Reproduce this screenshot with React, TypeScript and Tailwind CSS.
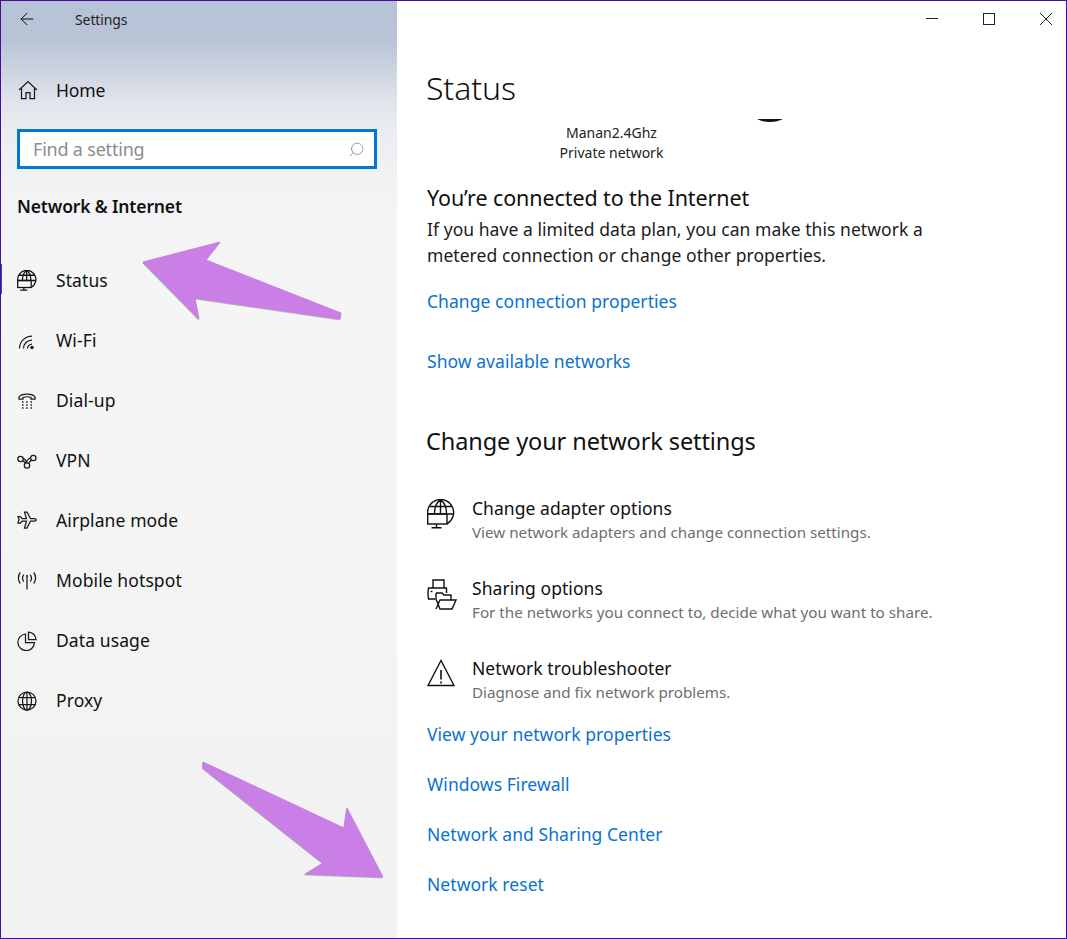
import React from 'react';
import { ArrowLeft, Search } from 'lucide-react';

const Arrow = ({ className, viewBox, points }: { className: string; viewBox: string; points: string }) => (
  <svg className={className} viewBox={viewBox} fill="none">
    <polygon points={points} fill="#777" opacity="0.6" transform="translate(-0.5 1)" stroke="#777" strokeWidth="0.5" />
    <polygon points={points} fill="#c97fe6" stroke="#c97fe6" strokeWidth="1" strokeLinejoin="round" />
  </svg>
);

const iconProps = {
  width: 20,
  height: 20,
  viewBox: '0 0 20 20',
  fill: 'none',
  stroke: '#1a1a1a',
  strokeWidth: 1.25,
};

const HomeIcon = () => (
  <svg {...iconProps}>
    <path d="M1 10 10 1.500 19 10M3.500 8v10.500h4.500v-6h4v6h4.500V8" />
  </svg>
);

const GlobeScreenIcon = ({ large }: { large?: boolean }) => (
  <svg width={large ? 28 : 20} height={large ? 30 : 21} viewBox="0 0 28 30" fill="none" stroke="#111" strokeWidth={large ? 1.4 : 1.8} className={large ? '' : '-mt-[2px]'}>
    <path d="M.7 15A13 13 0 1 1 20 24.800" />
    <path d="M7.500 15C7.500 7 10 3 13.500 .8 17 3 19.500 7 19.500 15M13.500 1v14M2.500 7.500h22M.7 15h26" />
    <rect x=".7" y="15" width="19.300" height="10" />
    <path d="M9.500 25v3.500M4.500 28.800h10" />
  </svg>
);

const WifiIcon = () => (
  <svg {...iconProps}>
    <path d="M2.500 17.500A12.500 12.500 0 0 1 15 5M6.500 17.500A8.500 8.500 0 0 1 15 9M10.500 17.500A4.500 4.500 0 0 1 15 13" />
    <circle cx="15" cy="16.500" r="1.700" fill="#111" stroke="none" />
  </svg>
);

const DialIcon = () => (
  <svg {...iconProps}>
    <path d="M2 8V6c2-4 14-4 16 0v2h-4V6.500c-2-1-6-1-8 0V8Z" />
    <path d="M5 11h1.500M9.200 11h1.500M13.500 11H15M5 14h1.500M9.200 14h1.500M13.500 14H15M5 17h1.500M9.200 17h1.500M13.500 17H15" strokeWidth="1.400" />
  </svg>
);

const VpnIcon = () => (
  <svg {...iconProps}>
    <circle cx="3.500" cy="8" r="2.700" />
    <circle cx="16.300" cy="7" r="2.700" />
    <circle cx="10" cy="14.500" r="2.700" />
    <path d="M6 7.500c2.500 0 3 2 3.500 4M13.700 7c-2.500 0-3 2-4 3.500s-2 1-3.700-.5M14.500 9.300c-1 1-2.500 1.700-3 3" />
  </svg>
);

const PlaneIcon = () => (
  <svg {...iconProps}>
    <path d="M7.500 1h2.500l3.500 6.500h4c2 0 2.500 2 .5 2.500h-4.500L10 17H7.500l2-7H5l-1.500 2H1l1-3.500L1 5.500h2.500L5 7.500h4.500Z" />
  </svg>
);

const HotspotIcon = () => (
  <svg {...iconProps}>
    <path d="M10 6v12.500" />
    <path d="M6.800 3.500c-1.500 2-1.500 5 0 7M13.200 3.500c1.500 2 1.500 5 0 7M3.300 1.500c-2.500 3-2.500 8 0 11M16.700 1.500c2.500 3 2.500 8 0 11" />
    <circle cx="10" cy="5" r="1" fill="#111" stroke="none" />
  </svg>
);

const PieIcon = () => (
  <svg {...iconProps}>
    <path d="M8.500 3A8.300 8.300 0 1 0 17.500 11.500H8.500Z" />
    <path d="M11.500 1.200c4 .3 7 3.200 7.500 7.300h-7.500Z" />
  </svg>
);

const GlobeIcon = () => (
  <svg {...iconProps}>
    <circle cx="10" cy="10" r="9" />
    <ellipse cx="10" cy="10" rx="4.500" ry="9" />
    <path d="M10 1v18M1.800 6.500h16.400M1.800 13.500h16.400" />
  </svg>
);

const PrinterFolderIcon = () => (
  <svg width="30" height="31" viewBox="0 0 30 31" fill="none" stroke="#111" strokeWidth="1.400">
    <path d="M6 9V1h11v8" />
    <path d="M8 20H1.500c-.5-3-.5-8 0-11h18v5" />
    <path d="M3.500 12.500h2" />
    <path d="M9 14h6l2 2h7v5" />
    <path d="M9 14v6l4 10h12l4-9H13l-4 9" />
  </svg>
);

const WarningIcon = () => (
  <svg width="28" height="28" viewBox="0 0 28 28" fill="none" stroke="#111" strokeWidth="1.400">
    <path d="M14 1.500 1 26.500h26Z" />
    <path d="M14 11v9.500M14 22.500v2" strokeWidth="1.600" />
  </svg>
);

const WindowButtons = () => (
  <div className="flex justify-end gap-[45px] pr-[14px] pt-[12px]">
    <svg width="12" height="12" viewBox="0 0 12 12" stroke="#222" fill="none"><path d="M0 5.500h12" /></svg>
    <svg width="12" height="12" viewBox="0 0 12 12" stroke="#222" fill="none"><rect x=".5" y=".5" width="11" height="11" /></svg>
    <svg width="12" height="12" viewBox="0 0 12 12" stroke="#222" fill="none"><path d="M0 0 12 12M12 0 0 12" /></svg>
  </div>
);

const navItems = [
  { label: 'Status', icon: <GlobeScreenIcon /> },
  { label: 'Wi-Fi', icon: <WifiIcon /> },
  { label: 'Dial-up', icon: <DialIcon /> },
  { label: 'VPN', icon: <VpnIcon /> },
  { label: 'Airplane mode', icon: <PlaneIcon /> },
  { label: 'Mobile hotspot', icon: <HotspotIcon /> },
  { label: 'Data usage', icon: <PieIcon /> },
  { label: 'Proxy', icon: <GlobeIcon /> },
];

const settingsRows = [
  { title: 'Change adapter options', text: 'View network adapters and change connection settings.', icon: <GlobeScreenIcon large /> },
  { title: 'Sharing options', text: 'For the networks you connect to, decide what you want to share.', icon: <PrinterFolderIcon /> },
  { title: 'Network troubleshooter', text: 'Diagnose and fix network problems.', icon: <WarningIcon /> },
];

const bottomLinks = ['View your network properties', 'Windows Firewall', 'Network and Sharing Center', 'Network reset'];

const App = () => {
  return (
    <div className="relative h-[939px] w-[1067px] overflow-hidden border border-[#4a0d96] bg-white font-['Noto_Sans','Open_Sans',sans-serif] text-[#111]">
      <div className="flex h-full">
        {/* sidebar */}
        <aside className="flex w-[396px] shrink-0 flex-col bg-[linear-gradient(180deg,#b6c2d6_0px,#b9c4d7_40px,#ccd4e0_70px,#e0e4eb_100px,#ebedf0_130px,#f3f3f5_190px,#f5f5f6_300px,#f2f2f3_100%)]">
          <div className="flex h-[36px] items-center">
            <ArrowLeft size={20} strokeWidth={1.2} className="ml-[16px]" />
            <span className="ml-[38px] text-[14px] tracking-[-0.1px] text-[#222]">Settings</span>
          </div>
          <div className="mt-[23px] flex h-[60px] items-center pl-[17px]">
            <HomeIcon />
            <span className="ml-[18px] text-[17.500px] tracking-[-0.1px]">Home</span>
          </div>
          <div className="ml-[16px] mt-[9px] flex h-[40px] w-[360px] items-center justify-between border-[3px] border-[#0078d7] bg-white pl-[13px] pr-[9px]">
            <span className="text-[18px] tracking-[-0.2px] text-[#8c8c8c]">Find a setting</span>
            <Search size={17} strokeWidth={1} className="-scale-x-100 text-[#777]" />
          </div>
          <div className="mb-[31px] ml-[16px] mt-[23px] text-[17.500px] font-semibold leading-[28px] tracking-[-0.15px]">Network &amp; Internet</div>
          {navItems.map((item, i) => (
            <div key={item.label} className="relative flex h-[60px] items-center pl-[16px]">
              {i === 0 && <div className="absolute left-0 top-[13px] h-[30px] w-[1px] bg-[#2a55b8]" />}
              <div className="flex w-[39px] shrink-0">{item.icon}</div>
              <span className="text-[17.500px] leading-none tracking-[0.1px]">{item.label}</span>
            </div>
          ))}
        </aside>

        {/* main panel */}
        <main className="flex-1 pl-[29px]">
          <div className="h-[62px]">
            <WindowButtons />
          </div>
          <h1 className="text-[32px] font-light leading-[50px] tracking-[-0.1px]">Status</h1>
          <div className="relative w-[371px] pt-[10px] text-center text-[14px] leading-[20px] text-[#222]">
            <svg className="absolute left-[331px] top-[6px] h-[3px] w-[26px]" viewBox="0 0 26 3" fill="#111">
              <path d="M0 0h26c-4 2-8 3-13 3S4 2 0 0Z" />
            </svg>
            <p>Manan2.4Ghz</p>
            <p>Private network</p>
          </div>
          <h2 className="ml-[1px] mt-[20px] text-[21.500px] leading-[30px] tracking-[-0.1px]">You’re connected to the Internet</h2>
          <p className="ml-[1px] mt-[3px] w-[520px] text-[17.500px] leading-[26px] text-[#1c1c1c] tracking-[0.05px]">
            If you have a limited data plan, you can make this network a metered connection or change other properties.
          </p>
          <a className="ml-[1px] mt-[20px] block text-[17.500px] leading-[26px] tracking-[0.05px] text-[#0a72cf]">Change connection properties</a>
          <a className="ml-[1px] mt-[34px] block text-[17.500px] leading-[26px] tracking-[0.05px] text-[#0a72cf]">Show available networks</a>
          <h2 className="mt-[50px] text-[23.500px] leading-[34px] tracking-[-0.1px]">Change your network settings</h2>
          <div className="mt-[37px] flex flex-col gap-[30px]">
            {settingsRows.map((row) => (
              <div key={row.title} className="flex h-[50px] items-start">
                <div className="mt-[4px] flex w-[46px] shrink-0 pl-[1px]">{row.icon}</div>
                <div>
                  <div className="text-[17.500px] leading-[26px] tracking-[0.05px]">{row.title}</div>
                  <div className="text-[15.200px] leading-[22px] text-[#6e6e6e]">{row.text}</div>
                </div>
              </div>
            ))}
          </div>
          <div className="mt-[16px] flex flex-col gap-[24px]">
            {bottomLinks.map((link) => (
              <a key={link} className="ml-[1px] block text-[17.500px] leading-[26px] tracking-[0.05px] text-[#0a72cf]">{link}</a>
            ))}
          </div>
        </main>
      </div>

      {/* annotation arrows */}
      <Arrow
        className="absolute left-[139px] top-[239px] h-[85px] w-[206px]"
        viewBox="140 240 206 85"
        points="143,262 220,242 206,260 341,313 340,319 195,298 199,319"
      />
      <Arrow
        className="absolute left-[199px] top-[757px] h-[125px] w-[188px]"
        viewBox="200 758 188 125"
        points="203,762 344,828 347,808 383,877 305,874 323,863 203,768"
      />
    </div>
  );
};

export default App;
